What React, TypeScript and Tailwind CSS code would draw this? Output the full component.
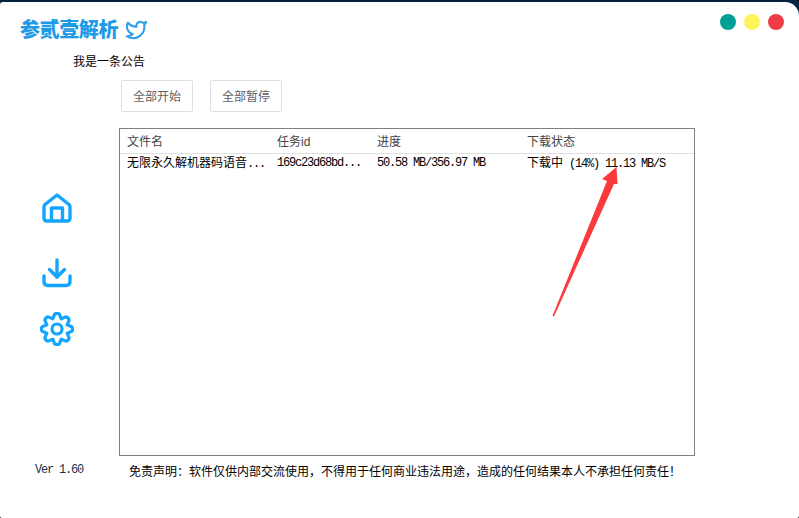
const cjk = "font-['Noto_Sans_CJK_SC',sans-serif]";
const mono = "font-['Liberation_Mono',monospace] text-[12px] tracking-[-1.2px]";

function Latin({ children }: { children: string }) {
  return <span className={mono}>{children}</span>;
}

function TwitterIcon() {
  return (
    <svg width="23" height="23" viewBox="0 0 24 24" fill="none" stroke="#2ba0f0" strokeWidth="2.2" strokeLinejoin="round" strokeLinecap="round">
      <path d="M22 4s-.7 2.1-2 3.4c1.6 10-9.4 17.3-18 11.6 2.2.1 4.4-.6 6-2C3 15.5.5 9.6 3 5c2.2 2.6 5.6 4.1 9 4-.9-4.2 4-6.6 7-3.8 1.1 0 3-1.2 3-1.2z" />
    </svg>
  );
}

function HomeIcon() {
  return (
    <svg width="30" height="30" viewBox="0 0 30 30" fill="none" stroke="#14a5ff" strokeWidth="3.4" strokeLinejoin="round">
      <path d="M15 2 L27 11.5 Q28 12.5 28 14 V25 Q28 28 25 28 H5 Q2 28 2 25 V14 Q2 12.5 3 11.5 Z" />
      <path d="M9.5 28 V15 H20.5 V28" />
    </svg>
  );
}

function DownloadIcon() {
  return (
    <svg width="30" height="30" viewBox="0 0 30 30" fill="none" stroke="#14a5ff" strokeWidth="3.4" strokeLinecap="round" strokeLinejoin="round">
      <path d="M15 2 V19" />
      <path d="M7.5 11.5 L15 19 L22.5 11.5" />
      <path d="M2 18 V23.5 Q2 27.5 6 27.5 H24 Q28 27.5 28 23.5 V18" />
    </svg>
  );
}

// cog with 8 rounded teeth
function gearPath() {
  const teeth = 8;
  const parts: string[] = [];
  for (let i = 0; i < teeth; i++) {
    const step = (Math.PI * 2) / teeth;
    const a = i * step - Math.PI / 2;
    const pt = (r: number, da: number) =>
      `${(17 + r * Math.cos(a + da)).toFixed(2)} ${(17 + r * Math.sin(a + da)).toFixed(2)}`;
    parts.push(`${i === 0 ? "M" : "L"}${pt(11, -step * 0.5)}`);
    parts.push(`L${pt(15, -step * 0.2)}`);
    parts.push(`Q${pt(16.4, 0)} ${pt(15, step * 0.2)}`);
  }
  return parts.join(" ") + " Z";
}

function GearIcon() {
  return (
    <svg width="34" height="34" viewBox="0 0 34 34" fill="none" stroke="#14a5ff" strokeWidth="3.2" strokeLinejoin="round">
      <path d={gearPath()} />
      <circle cx="17" cy="17" r="5" />
    </svg>
  );
}

function ActionButton({ label }: { label: string }) {
  return (
    <button type="button" className="h-8 w-[72px] rounded-[2px] border border-[#dcdfe6] bg-white text-xs text-[#606266]">
      {label}
    </button>
  );
}

export default function App() {
  return (
    <div className={`relative h-[518px] w-[799px] overflow-hidden bg-[#03233f] pt-[2px] text-xs text-black ${cjk}`}>
      <div className="h-[516px] rounded-tl-[3px] rounded-tr-[14px] rounded-b-[2px] bg-white">
        <div className="flex h-[54px] items-start justify-between pl-5 pr-[15px]">
          <div className="flex items-center gap-[7px] pt-[13px]">
            <span className="text-[20px] leading-7 font-black tracking-[-0.4px] text-[#1f9ae6]">参贰壹解析</span>
            <TwitterIcon />
          </div>
          <div className="flex gap-2 pt-3">
            <span className="h-4 w-4 rounded-full bg-[#009f95]" />
            <span className="h-4 w-4 rounded-full bg-[#fff35c]" />
            <span className="h-4 w-4 rounded-full bg-[#ee3d47]" />
          </div>
        </div>
        <div className="h-6 pl-[73px] leading-[10px]">我是一条公告</div>

        <div className="flex">
          <div className="flex w-[119px] shrink-0 flex-col pl-[42px]">
            <div className="mt-[113px] flex flex-col gap-[35px]">
              <HomeIcon />
              <DownloadIcon />
            </div>
            <div className="mt-[24px] -ml-[2px]">
              <GearIcon />
            </div>
            <div className={`mt-[116px] -ml-[7px] leading-4 text-[#16324a] ${mono}`}>Ver 1.60</div>
          </div>

          <div className="flex-1">
            <div className="flex gap-[17px] pl-[2px]">
              <ActionButton label="全部开始" />
              <ActionButton label="全部暂停" />
            </div>

            <div className="mt-4 h-[328px] w-[576px] border border-[#808080]">
              <div className="grid h-[25px] grid-cols-[150px_100px_150px_1fr] items-center border-b border-[#e0e0e0] pl-[7px] text-[#444]">
                <div>文件名</div>
                <div>
                  任务<span className="font-['Liberation_Sans',sans-serif]">id</span>
                </div>
                <div>进度</div>
                <div>下载状态</div>
              </div>
              <div className="grid h-[17px] grid-cols-[150px_100px_150px_1fr] items-center pl-[7px]">
                <div>
                  无限永久解机器码语音<Latin>...</Latin>
                </div>
                <div className={mono}>169c23d68bd...</div>
                <div className={mono}>50.58 MB/356.97 MB</div>
                <div>
                  下载中<Latin> (14%) 11.13 MB/S</Latin>
                </div>
              </div>
            </div>

            <div className="mt-[7px] pl-[10px] leading-4 whitespace-nowrap">
              免责声明：软件仅供内部交流使用，不得用于任何商业违法用途，造成的任何结果本人不承担任何责任！
            </div>
          </div>
        </div>
      </div>

      {/* red arrow pasted over the table */}
      <svg className="absolute top-0 left-0" width="799" height="518" viewBox="0 0 799 518">
        <polygon points="616.5,167 617.5,184 614,184 554,316.5 552.5,316 607,181 602,179" fill="#fb3a3e" />
      </svg>
    </div>
  );
}
